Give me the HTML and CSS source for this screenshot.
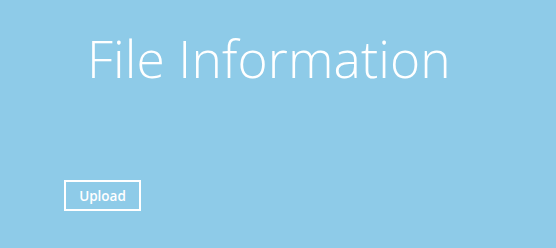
FILE: index.html
```html
<!DOCTYPE html>
<html lang="en">
<head>
    <meta charset="UTF-8">
    <title>File Information</title>
    <link rel="stylesheet" href="styles.css">
</head>
<body>
    <div class="page">
        <h1 class="title">File Information</h1>
        <button class="upload-btn">Upload</button>
    </div>
</body>
</html>
```

FILE: styles.css
```css
html, body {
    margin: 0;
    height: 100%;
}

body {
    background-color: #8ecbe8;
    font-family: 'Open Sans', 'Segoe UI', sans-serif;
    color: #fff;
}

.page {
    padding: 26px 0 0 64px;
}

.title {
    margin: 0 0 0 23px;
    font-size: 51.5px;
    font-weight: 300;
    line-height: 64px;
    letter-spacing: 0.1px;
}

.upload-btn {
    display: block;
    margin-top: 90px;
    width: 77px;
    height: 31px;
    padding: 0;
    background: transparent;
    border: 2px solid #fff;
    color: #fff;
    font-family: 'Open Sans', sans-serif;
    font-size: 13.5px;
    font-weight: 600;
}
```
